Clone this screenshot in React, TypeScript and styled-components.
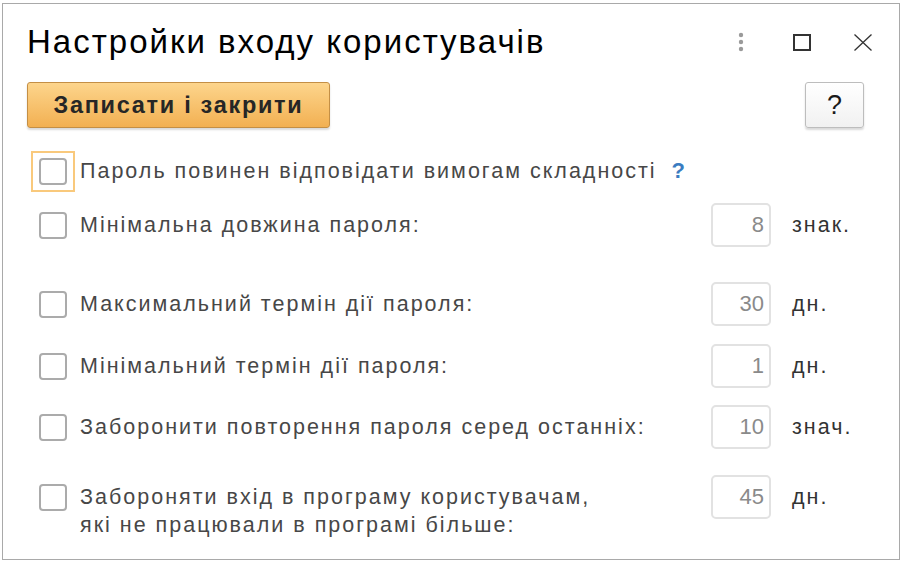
import React from "react";
import styled, { createGlobalStyle } from "styled-components";

const GlobalStyle = createGlobalStyle`
  html, body { margin: 0; padding: 0; background: #ffffff; }
  body { font-family: "Liberation Sans", Arial, sans-serif; }
  * { box-sizing: border-box; }
`;

const Window = styled.div`
  margin: 3px 0 0 2px;
  width: 898px;
  height: 557px;
  border: 1px solid #a9a9a9;
  background: #ffffff;
  display: flex;
  flex-direction: column;
`;

const Header = styled.div`
  display: flex;
  align-items: center;
  justify-content: space-between;
  padding: 20px 16px 0 24px;
  height: 56px;
`;

const Title = styled.h1`
  margin: 0;
  font-weight: normal;
  font-size: 33px;
  letter-spacing: 2px;
  line-height: 36px;
  color: #000000;
`;

const HeaderIcons = styled.div`
  display: flex;
  align-items: center;
  gap: 21px;
`;

const IconButton = styled.div`
  width: 40px;
  height: 36px;
  display: flex;
  align-items: center;
  justify-content: center;
`;

const Toolbar = styled.div`
  display: flex;
  justify-content: space-between;
  align-items: flex-start;
  padding: 0 35px 0 24px;
  margin-top: 22px;
`;

const PrimaryButton = styled.button`
  width: 303px;
  height: 46px;
  border: 1px solid #c48f45;
  border-radius: 3px;
  background: linear-gradient(#fdd58c, #f2b052);
  box-shadow: 0 2px 2px rgba(0, 0, 0, 0.15);
  font-family: "Liberation Sans", Arial, sans-serif;
  font-weight: bold;
  font-size: 23.5px;
  letter-spacing: 1.7px;
  color: #262626;
  padding: 0;
`;

const HelpButton = styled.button`
  width: 59px;
  height: 46px;
  border: 1px solid #bdbdbd;
  border-radius: 3px;
  background: linear-gradient(#ffffff, #f1f1f1);
  box-shadow: 0 2px 2px rgba(0, 0, 0, 0.15);
  font-family: "Liberation Sans", Arial, sans-serif;
  font-size: 27px;
  color: #1a1a1a;
  padding: 0;
`;

const Form = styled.div`
  display: flex;
  flex-direction: column;
  padding: 0 42px 0 28px;
  margin-top: 21px;
`;

const Row = styled.div<{ $gap: number }>`
  display: grid;
  grid-template-columns: 44px 1fr 60px 86px;
  align-items: start;
  margin-top: ${(p) => p.$gap}px;
`;

const CheckCell = styled.div`
  height: 44px;
  display: flex;
  align-items: center;
  justify-content: center;
`;

const FocusFrame = styled.span<{ $focused?: boolean }>`
  display: flex;
  padding: 5px 6px;
  border: 2px solid ${(p) => (p.$focused ? "#f9c97c" : "transparent")};
`;

const Check = styled.span`
  display: block;
  width: 28px;
  height: 27px;
  border: 2px solid #ababab;
  border-radius: 4px;
  background: #ffffff;
`;

const Label = styled.div<{ $wide?: boolean }>`
  grid-column: ${(p) => (p.$wide ? "2 / 5" : "2")};
  padding: 8px 0 0 5px;
  font-size: 21.5px;
  letter-spacing: 2px;
  line-height: 28px;
  color: #474747;
`;

const Hint = styled.span`
  color: #3a7cc1;
  font-weight: bold;
  font-size: 22px;
  margin-left: 15px;
`;

const NumberBox = styled.div`
  height: 44px;
  border: 2px solid #e2e2e2;
  border-radius: 5px;
  padding: 0 5px 0 0;
  display: flex;
  align-items: center;
  justify-content: flex-end;
  font-size: 22px;
  color: #8a8a8a;
`;

const Unit = styled.div`
  padding: 8px 0 0 21px;
  font-size: 21.5px;
  letter-spacing: 2px;
  line-height: 28px;
  color: #333333;
`;

const DotsIcon = () => (
  <svg width="6" height="20" viewBox="0 0 6 20">
    <circle cx="3" cy="3" r="2.2" fill="#9a9a9a" />
    <circle cx="3" cy="10" r="2.2" fill="#9a9a9a" />
    <circle cx="3" cy="17" r="2.2" fill="#9a9a9a" />
  </svg>
);

const MaximizeIcon = () => (
  <svg width="18" height="17" viewBox="0 0 18 17">
    <rect x="1" y="1" width="16" height="15" fill="none" stroke="#333" strokeWidth="2" />
  </svg>
);

const CloseIcon = () => (
  <svg width="20" height="17" viewBox="0 0 20 17">
    <path d="M1.5 0.5 L18.5 16.5 M18.5 0.5 L1.5 16.5" stroke="#333" strokeWidth="1.3" fill="none" />
  </svg>
);

type Field = {
  label: React.ReactNode;
  value?: string;
  unit?: string;
  gap: number;
  focused?: boolean;
  hint?: boolean;
};

const fields: Field[] = [
  { label: "Пароль повинен відповідати вимогам складності", gap: 0, focused: true, hint: true },
  { label: "Мінімальна довжина пароля:", value: "8", unit: "знак.", gap: 10 },
  { label: "Максимальний термін дії пароля:", value: "30", unit: "дн.", gap: 35 },
  { label: "Мінімальний термін дії пароля:", value: "1", unit: "дн.", gap: 18 },
  { label: "Заборонити повторення пароля серед останніх:", value: "10", unit: "знач.", gap: 17 },
  {
    label: (
      <>
        Забороняти вхід в програму користувачам,
        <br />
        які не працювали в програмі більше:
      </>
    ),
    value: "45",
    unit: "дн.",
    gap: 26,
  },
];

export default function App() {
  return (
    <>
      <GlobalStyle />
      <Window>
        <Header>
          <Title>Настройки входу користувачів</Title>
          <HeaderIcons>
            <IconButton>
              <DotsIcon />
            </IconButton>
            <IconButton>
              <MaximizeIcon />
            </IconButton>
            <IconButton>
              <CloseIcon />
            </IconButton>
          </HeaderIcons>
        </Header>
        <Toolbar>
          <PrimaryButton>Записати і закрити</PrimaryButton>
          <HelpButton>?</HelpButton>
        </Toolbar>
        <Form>
          {fields.map((f, i) => (
            <Row key={i} $gap={f.gap}>
              <CheckCell>
                <FocusFrame $focused={f.focused}>
                  <Check />
                </FocusFrame>
              </CheckCell>
              <Label $wide={!f.value}>
                {f.label}
                {f.hint && <Hint>?</Hint>}
              </Label>
              {f.value && <NumberBox>{f.value}</NumberBox>}
              {f.unit && <Unit>{f.unit}</Unit>}
            </Row>
          ))}
        </Form>
      </Window>
    </>
  );
}
